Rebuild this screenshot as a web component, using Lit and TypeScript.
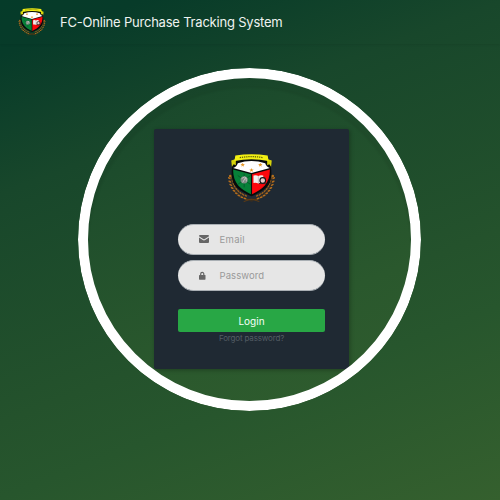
import { LitElement, html, css, svg } from "lit";
import { customElement } from "lit/decorators.js";

const leaves = Array.from({ length: 9 }, (_, i) => {
  const a = ((4 + i * 8.6) * Math.PI) / 180;
  const deg = (a * 180) / Math.PI;
  const at = (r: number) => ({ x: 24 - r * Math.cos(a), y: 23 + r * Math.sin(a) * 1.03 });
  return { outer: at(22.8), inner: at(19.8), deg };
});

const branch = svg`
  <path d="M2.400 23C3 34 10 43 25 48.300" fill="none" stroke="#4d3212" stroke-width=".6"/>
  ${leaves.map(
    (l) => svg`
      <ellipse cx=${l.outer.x} cy=${l.outer.y} rx="1.600" ry=".85" fill="#b56d1c"
        transform="rotate(${35 - l.deg * 0.2} ${l.outer.x} ${l.outer.y})"/>
      <ellipse cx=${l.inner.x} cy=${l.inner.y} rx="1.500" ry=".75" fill="#a0611b"
        transform="rotate(${75 - l.deg * 0.5} ${l.inner.x} ${l.inner.y})"/>`
  )}
  <circle cx="2.300" cy="22.500" r="1.400" fill="#b4701c"/>
  <path d="M16 48.600Q23 45 30 46.400" fill="none" stroke="#5f3b12" stroke-width="1"/>`;

const star = (x: number, y: number) => svg`
  <path transform="translate(${x} ${y})" fill="#e79a2b"
    d="M0-2.200L.6-.7 2.200-.6 1 .4 1.400 2 0 1-1.400 2-1 .4-2.200-.6-.6-.7z"/>`;

@customElement("school-crest")
class SchoolCrest extends LitElement {
  static styles = css`
    :host { display: block; }
    svg { display: block; width: 100%; height: 100%; }
  `;
  render() {
    return html`<svg viewBox="0 0 48 50" aria-hidden="true">
      <g>${branch}</g>
      <g transform="matrix(-1 0 0 1 48 0)">${branch}</g>
      <path d="M8 7Q24 3 40 7L43.500 11.500Q45.300 21 43 28.500C40 35.500 32 39.500 24 43C16 39.500 8 35.500 5 28.500Q2.700 21 4.500 11.500z" fill="#080b0b"/>
      <path d="M10 9.500Q24 5 38 9.500Q39 13 42.800 14.300L24 19.500 5.200 14.300Q9 13 10 9.500z" fill="#fff"/>
      <path d="M5.200 15.800L23.400 20.700V41C13 36 5.200 30.500 5.200 15.800z" fill="#078038"/>
      <path d="M42.800 15.800L24.600 20.700V41C35 36 42.800 30.500 42.800 15.800z" fill="#fb080c"/>
      ${star(15, 11)}${star(33, 11)}${star(24, 16.400)}
      <path d="M10 22l13 9M10 31l13-9M16.500 20v14" stroke="#075229" stroke-width=".8"/>
      <circle cx="16.500" cy="26.300" r="3.700" fill="#7c8982"/>
      <path d="M14 25q3-3 5 0M15 29l3-5 1 4" fill="none" stroke="#c3cac4" stroke-width=".9"/>
      <path d="M26 22q3-1 5 .5 2-1.500 5-.5v7.500q-3-.5-5 .5-2-1-5-.5z" fill="#f3eeee"/>
      <path d="M31 22.500v7.500" stroke="#aaa" stroke-width=".6"/>
      <circle cx="35.500" cy="27" r="2.900" fill="#e9c9c9" stroke="#151515" stroke-width="1.200"/>
      <path d="M31.500 30.200h7" stroke="#222" stroke-width=".8"/>
      <path d="M3.300 6.500L8 5v6.500L5.800 10.500 4 13zM44.700 6.500L40 5v6.500l2.200-1L44 13z" fill="#d6d30c"/>
      <path d="M7.500 1.600Q24-.9 40.500 1.600L41.500 7.200Q24 3.400 6.500 7.200z" fill="#f2ef13"/>
      <path d="M12 3.700Q24 1.700 36 3.700" fill="none" stroke="#5d5e0c" stroke-width="1.300" stroke-dasharray="1.300 .9"/>
    </svg>`;
  }
}

@customElement("app-root")
class AppRoot extends LitElement {
  static styles = css`
    :host {
      display: block;
      height: 500px;
      overflow: hidden;
      font-family: Inter, "Open Sans", sans-serif;
      background: linear-gradient(159deg, #053b29 0%, #073b29 8%, #18472b 28%, #24522c 61%, #27562d 72%, #35602e 100%);
    }
    .page { display: flex; flex-direction: column; height: 500px; }
    .bar {
      display: flex; align-items: center; gap: 14px;
      box-sizing: border-box; height: 44px; padding-left: 18px;
      box-shadow: 0 1px 2px rgba(0, 0, 0, 0.07);
    }
    .bar school-crest { width: 28px; height: 28px; }
    .title {
      color: #eef3f0; font-size: 13px; line-height: 20px;
      letter-spacing: -0.21px; white-space: nowrap;
    }
    .lens {
      position: relative; box-sizing: border-box;
      width: 343px; height: 343px; margin: 24px 0 0 78px;
      border-radius: 50%; overflow: hidden;
      background: linear-gradient(159deg, #15442b 0%, #1d4c2c 25%, #2a582d 68%, #305d2e 100%);
    }
    .ring {
      position: absolute; inset: 0; box-sizing: border-box;
      border: 10px solid #fff; border-radius: 50%;
      box-shadow: inset 0 10px 2px rgba(0, 20, 20, 0.06);
    }
    .card {
      display: flex; flex-direction: column; align-items: center;
      box-sizing: border-box; width: 195px; height: 240px;
      margin: 61px 0 0 76px; padding: 25px 24px 0;
      border-radius: 2px; background: #1f2933;
      box-shadow: 1px 1px 4px rgba(0, 0, 0, 0.3);
    }
    .card school-crest { width: 47px; height: 49px; }
    .field {
      display: flex; align-items: center; box-sizing: border-box;
      width: 147px; height: 31px; padding-left: 21px;
      border: 1px solid #a9afb4; border-width: 1px 0; border-radius: 16px;
      background: #e6e6e6; color: #999; font-size: 9.500px;
    }
    .email { margin-top: 20.500px; letter-spacing: 0.3px; }
    .password { margin-top: 5.500px; letter-spacing: 0.1px; }
    .icon { width: 20.500px; height: 10px; display: block; flex: none; }
    .login {
      display: flex; align-items: center; justify-content: center;
      width: 147px; height: 23px; margin-top: 18px;
      border-radius: 2px; background: #28a745; color: #f6fff8; font-size: 10px;
    }
    .forgot {
      margin-top: 1px; color: #545d65; font-size: 8px; line-height: 11px;
      letter-spacing: -0.15px; white-space: nowrap;
    }
  `;
  render() {
    return html`<div class="page">
      <header class="bar">
        <school-crest></school-crest>
        <span class="title">FC-Online Purchase Tracking System</span>
      </header>
      <main class="lens">
        <section class="card">
          <school-crest></school-crest>
          <div class="field email">
            <svg class="icon" viewBox="0 0 20.500 10">
              <path d="M0 2.200V2q0-1 1-1h8q1 0 1 1v.2L5.800 5.100Q5 5.600 4.200 5.100zM0 3.500l3.800 2.600q1.200.8 2.400 0L10 3.500V8q0 1-1 1H1Q0 9 0 8z" fill="#666"/>
            </svg>
            <span>Email</span>
          </div>
          <div class="field password">
            <svg class="icon" viewBox="0 0 20.500 10">
              <path d="M1.700 4.500V3a1.550 1.700 0 0 1 3.100 0v1.500" fill="none" stroke="#666" stroke-width="1.200"/>
              <rect y="4" width="6.500" height="4.700" rx=".6" fill="#666"/>
            </svg>
            <span>Password</span>
          </div>
          <div class="login">Login</div>
          <div class="forgot">Forgot password?</div>
        </section>
        <div class="ring"></div>
      </main>
    </div>`;
  }
}
